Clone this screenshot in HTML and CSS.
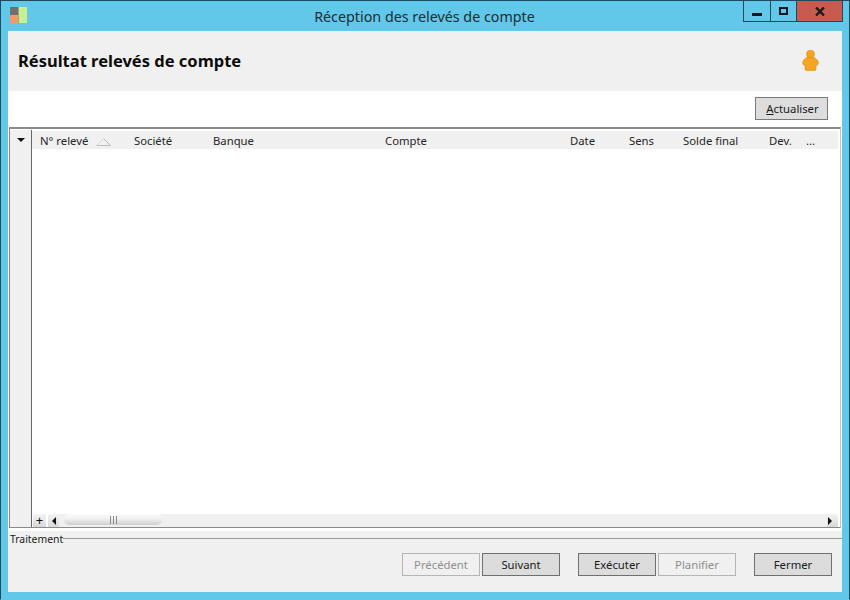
FILE: index.html
```html
<!DOCTYPE html>
<html lang="fr">
<head>
<meta charset="utf-8">
<title>Réception des relevés de compte</title>
<link rel="stylesheet" href="styles.css">
</head>
<body>
<div class="window">
  <div class="titlebar">
    <svg class="app-icon" width="17" height="17" viewBox="0 0 17 17"><rect x="0" y="0" width="8" height="8" fill="#6f6f6f"/><rect x="0" y="8" width="8" height="8" fill="#f59a62"/><rect x="8" y="0" width="1" height="16" fill="#8fb07a"/><rect x="9" y="0" width="8" height="16" fill="#c9f08e"/></svg>
    <div class="title">Réception des relevés de compte</div>
    <div class="controls">
      <div class="ctl ctl-min"><span class="min-glyph"></span></div>
      <div class="ctl ctl-max"><span class="max-glyph"></span></div>
      <div class="ctl ctl-close"><svg width="10" height="9" viewBox="0 0 10 9"><path d="M1 0.5 L9 8.5 M9 0.5 L1 8.5" stroke="#1a1a1a" stroke-width="2.4" fill="none"/></svg></div>
    </div>
  </div>
  <div class="client">
    <div class="header">
      <h1 class="heading">Résultat relevés de compte</h1>
      <svg class="user" width="17" height="21" viewBox="0 0 17 21"><circle cx="8.5" cy="4.2" r="4" fill="#f7a520" stroke="#d98c10" stroke-width=".6"/><path d="M4.5 7.5 H12.5 Q15 9 16.5 12.5 Q16.5 15 14 15.5 V19 Q14 20.5 12.5 20.5 H4.5 Q3 20.5 3 19 V15.5 Q0.5 15 0.5 12.5 Q2 9 4.5 7.5 Z" fill="#f7a520" stroke="#d98c10" stroke-width=".6"/></svg>
    </div>
    <div class="toolbar">
      <button class="btn btn-refresh"><span class="ul">A</span>ctualiser</button>
    </div>
    <div class="grid">
      <div class="gutter"><span class="menu-arrow"></span></div>
      <div class="grid-main">
        <div class="cols">
          <div class="col col-num">N° relevé<svg class="sort" width="15" height="8" viewBox="0 0 15 8"><path d="M0.5 7.5 H14.5 L7.5 0.5" fill="none" stroke="#bdbdbd" stroke-width="1"/><path d="M7.5 0.5 L0.5 7.5" fill="none" stroke="#d8d8d8" stroke-width="1"/></svg></div>
          <div class="col">Société</div>
          <div class="col">Banque</div>
          <div class="col">Compte</div>
          <div class="col">Date</div>
          <div class="col">Sens</div>
          <div class="col">Solde final</div>
          <div class="col">Dev.</div>
          <div class="col">...</div>
        </div>
        <div class="rows"></div>
        <div class="scrollrow">
          <div class="plus">+</div>
          <div class="hscroll">
            <div class="arrow-btn"><span class="tri-left"></span></div>
            <div class="thumb"><span class="grip"></span></div>
            <div class="track"></div>
            <div class="arrow-btn"><span class="tri-right"></span></div>
          </div>
        </div>
      </div>
    </div>
    <div class="footer">
      <div class="legend"><span class="legend-text">Traitement</span><span class="legend-line"></span></div>
      <div class="actions">
        <button class="btn btn-act btn-off">Précédent</button>
        <button class="btn btn-act">Suivant</button>
        <button class="btn btn-act btn-sep">Exécuter</button>
        <button class="btn btn-act btn-off">Planifier</button>
        <button class="btn btn-act btn-sep">Fermer</button>
      </div>
    </div>
  </div>
</div>
</body>
</html>
```
FILE: styles.css
```css
* { box-sizing: border-box; }
html, body { margin: 0; padding: 0; }
body { width: 850px; height: 600px; overflow: hidden; font-family: "Noto Sans", "Open Sans", sans-serif; font-size: 11.3px; color: #1a1a1a; }
.window { width: 850px; height: 600px; background: #62c8ea; border: 1px solid #1c4a60; border-bottom-color: #62c8ea; border-right-color: #1c4a60; padding: 0 7px 7px; display: flex; flex-direction: column; }
.titlebar { height: 30px; flex: none; display: flex; align-items: flex-start; position: relative; }
.app-icon { margin: 6px 0 0 2px; flex: none; }
.title { position: absolute; left: 0; right: 0; top: 6px; text-align: center; font-size: 14.3px; line-height: 19px; color: #1f2c33; padding-right: 1px; }
.controls { margin-left: auto; display: flex; height: 21px; border: 1px solid #1c4a60; border-top: 0; margin-right: -1px; position: relative; }
.ctl { display: flex; align-items: center; justify-content: center; height: 20px; }
.ctl-min { width: 27px; border-right: 1px solid #1c4a60; }
.ctl-max { width: 26px; border-right: 1px solid #1c4a60; }
.ctl-close { width: 45px; background: #c75b50; }
.min-glyph { width: 10px; height: 3px; background: #101820; margin-top: 6px; }
.max-glyph { width: 9px; height: 8px; border: 2px solid #101820; }
.client { flex: 1; display: flex; flex-direction: column; background: #fff; min-height: 0; }
.header { height: 60px; flex: none; background: #f0f0f0; display: flex; align-items: center; justify-content: space-between; padding: 0 23px 2px 10px; }
.heading { margin: 0; font-family: "Noto Sans", sans-serif; font-size: 16.5px; font-weight: 700; color: #0c0c0c; }
.toolbar { height: 36px; flex: none; display: flex; justify-content: flex-end; align-items: flex-start; padding: 6px 14px 0 0; }
.btn { font-family: "Noto Sans", "Open Sans", sans-serif; font-size: 11.3px; color: #1a1a1a; background: #dddddd; border: 1px solid #7a7a7a; padding: 0; margin: 0; }
.btn-refresh { width: 73px; height: 23px; padding-left: 2px; }
.ul { text-decoration: underline; }
.grid { flex: 1; min-height: 0; margin: 0 0 0 1px; width: 832px; display: flex; border: 2px solid #8a8a8a; border-bottom: 1px solid #8a8a8a; border-right: 1px solid #c4c4c4; border-left: 1px solid #8a8a8a; background: #fff; padding-top: 2px; }
.gutter { width: 22px; flex: none; background: #f0f0f0; border-right: 1px solid #666; margin-top: -1px; padding: 8px 0 0 7px; }
.menu-arrow { display: block; width: 0; height: 0; border-left: 4px solid transparent; border-right: 4px solid transparent; border-top: 4px solid #111; }
.grid-main { flex: 1; min-width: 0; display: flex; flex-direction: column; }
.cols { height: 18px; flex: none; background: #f0f0f0; display: grid; grid-template-columns: 94px 79px 172px 185px 59px 54px 86px 37px 32px; padding-left: 8px; margin-right: 2px; line-height: 20px; }
.col { white-space: nowrap; color: #262626; }
.col-num { display: flex; align-items: center; }
.sort { margin: 2px 0 0 8px; }
.rows { flex: 1; }
.scrollrow { height: 13px; flex: none; display: flex; margin-right: 2px; padding-left: 1px; }
.plus { width: 13px; height: 13px; flex: none; text-align: center; line-height: 12px; font-size: 13px; color: #111; background: linear-gradient(#f4f4f4, #d8d8d8); margin-right: 2px; }
.hscroll { flex: 1; display: flex; background: #f0f0f0; height: 13px; }
.arrow-btn { width: 11px; flex: none; background: linear-gradient(#f4f4f4, #d8d8d8); display: flex; align-items: center; justify-content: center; }
.tri-left { border-top: 4px solid transparent; border-bottom: 4px solid transparent; border-right: 4px solid #111; }
.tri-right { border-top: 4px solid transparent; border-bottom: 4px solid transparent; border-left: 4px solid #111; margin-right: 5px; }
.thumb { width: 98px; margin-left: 5px; height: 11px; border-radius: 5px; background: linear-gradient(#fbfbfb, #f2f2f2 40%, #cfcfcf); display: flex; align-items: center; justify-content: center; }
.grip { width: 7px; height: 8px; border-left: 1px solid #8a8a8a; border-right: 1px solid #8a8a8a; background: linear-gradient(90deg, transparent 2px, #8a8a8a 2px, #8a8a8a 3px, transparent 3px); }
.track { flex: 1; }
.footer { height: 64px; flex: none; background: #f0f0f0; border-top: 3px solid #fff; display: flex; flex-direction: column; }
.legend { display: flex; align-items: center; height: 14px; }
.legend-text { font-size: 10.4px; line-height: 16px; padding: 2px 0 0 2px; color: #1a1a1a; }
.legend-line { flex: 1; height: 1px; background: #9a9a9a; }
.actions { display: flex; justify-content: flex-end; padding: 8px 10px 0 0; }
.btn-act { width: 78px; height: 23px; margin-left: 2px; background: #dcdcdc; border-color: #6f6f6f; }
.btn-sep { margin-left: 18px; }
.btn-off { background: #f0f0f0; color: #8f8f8f; border-color: #b5b5b5; }
```
